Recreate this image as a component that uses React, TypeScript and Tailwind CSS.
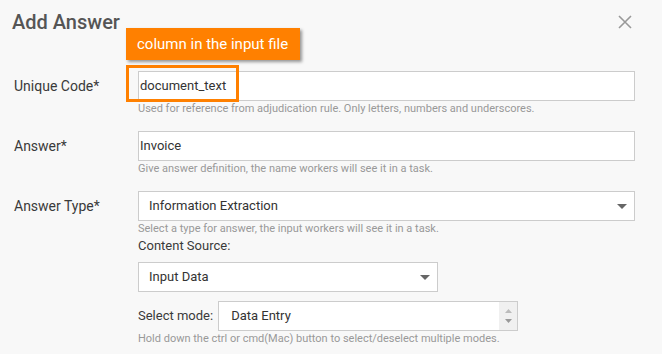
import React from 'react'

function Caret({ className = '' }: { className?: string }) {
    return (
        <svg width="10" height="5" viewBox="0 0 10 5" className={className}>
            <polygon points="0,0 10,0 5,5" fill="#666" />
        </svg>
    )
}

function Help({ children }: { children: React.ReactNode }) {
    return <p className="mt-[1px] text-[11px] leading-[14px] text-[#999]">{children}</p>
}

function Row({ label, children }: { label: string; children: React.ReactNode }) {
    return (
        <div className="flex mb-[15px]">
            <div className="w-[138px] pl-[14px] text-[14px] leading-[30px] text-[#3a3a3a]">{label}</div>
            <div className="w-[497px]">{children}</div>
        </div>
    )
}

export default function App() {
    return (
        <main
            className="relative w-[662px] h-[354px] overflow-hidden bg-[#f8f8f8]"
            style={{ fontFamily: 'Roboto, "Noto Sans", sans-serif' }}
        >
            <header className="flex justify-between h-[71px] pl-[12px] pr-[30px] pt-[10px]">
                <h1 className="text-[20px] leading-[24px] font-medium text-[#555]">Add Answer</h1>
                <svg width="14" height="14" viewBox="0 0 14 14" className="mt-[5px]">
                    <path d="M1 1L13 13M13 1L1 13" stroke="#999" strokeWidth="1.6" />
                </svg>
            </header>

            <Row label="Unique Code*">
                <div className="h-[30px] border border-[#ccc] bg-white pl-[1px] text-[13px] leading-[28px] text-[#333]">
                    document_text
                </div>
                <Help>Used for reference from adjudication rule. Only letters, numbers and underscores.</Help>
            </Row>

            <Row label="Answer*">
                <div className="h-[30px] border border-[#ccc] bg-white pl-[1px] text-[13px] leading-[28px] text-[#333]">
                    Invoice
                </div>
                <Help>Give answer definition, the name workers will see it in a task.</Help>
            </Row>

            <Row label="Answer Type*">
                <div className="flex items-center justify-between h-[30px] border border-[#ccc] bg-white pl-[10px] pr-[7px] text-[13px] text-[#333]">
                    <span>Information Extraction</span>
                    <Caret />
                </div>
                <Help>Select a type for answer, the input workers will see it in a task.</Help>
                <div className="mt-[2px] text-[13px] leading-[16px] text-[#3a3a3a]">Content Source:</div>
                <div className="mt-[8px] flex items-center justify-between w-[300px] h-[30px] border border-[#ccc] bg-white pl-[10px] pr-[7px] text-[13px] text-[#333]">
                    <span>Input Data</span>
                    <Caret />
                </div>
                <div className="mt-[9px] flex items-center">
                    <span className="mr-[5px] text-[13px] text-[#3a3a3a]">Select mode:</span>
                    <div className="flex w-[300px] h-[30px] border border-[#ccc] bg-white">
                        <span className="flex-1 pl-[12px] text-[13px] leading-[28px] text-[#333]">Data Entry</span>
                        <div className="flex flex-col items-center justify-between w-[18px] bg-[#f0f0f0] py-[7px]">
                            <svg width="7" height="4" viewBox="0 0 7 4">
                                <polygon points="0,4 7,4 3.5,0" fill="#bbb" />
                            </svg>
                            <svg width="7" height="4" viewBox="0 0 7 4">
                                <polygon points="0,0 7,0 3.5,4" fill="#999" />
                            </svg>
                        </div>
                    </div>
                </div>
                <Help>Hold down the ctrl or cmd(Mac) button to select/deselect multiple modes.</Help>
            </Row>

            <div className="absolute left-[126px] top-[28px] w-[174px] h-[32px] bg-[#ff8000] pl-[11px] text-[15px] leading-[32px] text-white shadow-[2px_2px_3px_rgba(0,0,0,0.4)]">
                column in the input file
            </div>
            <div className="absolute left-[126px] top-[65px] w-[113px] h-[37px] border-[3px] border-[#ff8000]" />
        </main>
    )
}
